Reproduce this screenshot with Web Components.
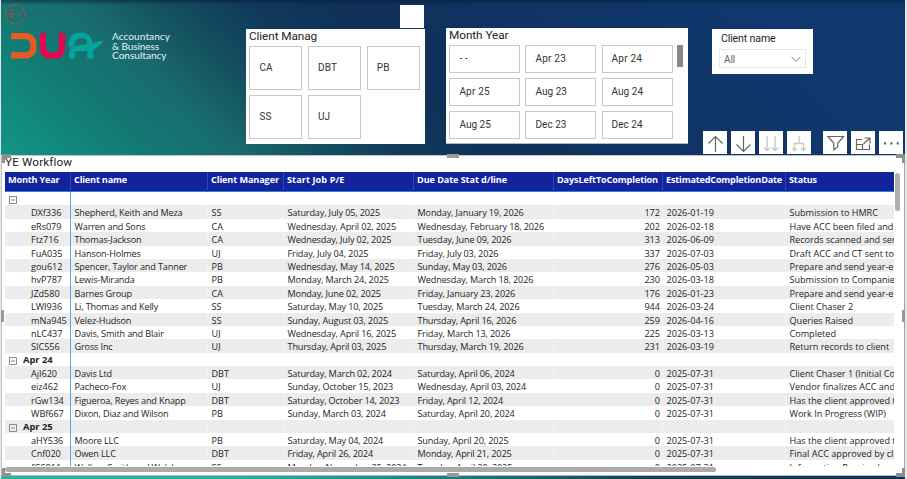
<!DOCTYPE html>
<html lang="en">
<head>
<meta charset="utf-8">
<title>YE Workflow</title>
<style>
html,body{margin:0;padding:0;width:907px;height:479px;overflow:hidden;background:#e6e6e6}
</style>
</head>
<body>
<report-page></report-page>
<script>
function define(name, html, setup) {
  const t = document.createElement('template');
  t.innerHTML = html;
  customElements.define(name, class extends HTMLElement {
    connectedCallback() {
      if (this.shadowRoot) return;
      this.attachShadow({mode: 'open'}).appendChild(t.content.cloneNode(true));
      if (setup) setup(this, this.shadowRoot);
    }
  });
}

// Text whose tracking is adjusted so that it takes the width in its "w" attribute.
define('fit-text', `<style>:host{display:inline-block;white-space:nowrap}</style><span><slot></slot></span>`, (el, root) => {
  const w = parseFloat(el.getAttribute('w'));
  if (!w) return;
  const s = root.querySelector('span');
  const n = el.textContent.length;
  s.style.letterSpacing = ((w - s.getBoundingClientRect().width) / n) + 'px';
});

define('brand-logo', `
<style>
:host{display:flex;align-items:flex-start;color:#e4f0ef;font:10.1px/9.5px Lato,sans-serif}
svg{display:block;flex:none}
.t{display:flex;flex-direction:column;padding-left:8px}
</style>
<svg width="93" height="29" viewBox="0 0 93 29" fill="none">
<path d="M.3 4.2H14.8A7.6 7.6 0 0 1 22.4 11.8V15.8A7.6 7.6 0 0 1 14.8 23.4H.3" stroke="#ea5a1e" stroke-width="6.2"/>
<path d="M31.9 1.1V14.5Q31.9 23.5 39.6 23.5H43Q51 23.5 51 14.5V1.1" stroke="#e5064f" stroke-width="6.2"/>
<path d="M57.7 15.4V11.5Q58 0.8 68.7 .8H72.2Q79.2 1 82 10.7L92.3 8.6Q88.5 15.2 82.4 17.4V26.6H76.3V19H67Q64 19.2 63.8 22V26.6H57.7V21.5Q58 14.5 66.5 13.7L76.2 12Q76 6.2 71.5 6.2H68.7Q63.8 6.3 63.6 11.7Q63.6 15.2 57.7 15.4Z" fill="#05a39b"/>
</svg>
<div class="t"><fit-text w="58">Accountancy</fit-text><fit-text w="47">&amp; Business</fit-text><fit-text w="54.5">Consultancy</fit-text></div>`);

define('slicer-tile', `
<style>:host{display:flex;align-items:center;box-sizing:border-box;border:1px solid #c8c8c8;padding-left:9px;color:#333;font:10px/12px Roboto,sans-serif;background:#fff}</style>
<slot></slot>`);

define('tile-slicer', `
<style>
:host{display:block;box-sizing:border-box;background:#fff;color:#252423}
.h{font:11.8px/14px Roboto,sans-serif;padding:0 0 0 3px;height:17px;box-sizing:border-box}
.g{display:grid;padding-left:3.4px;grid-template-columns:var(--cols);grid-auto-rows:var(--row);gap:var(--gap)}
.b{display:flex}.s{width:6px;height:22px;background:#8a8886;margin-left:4px}
</style>
<div class="h"><slot name="title"></slot></div><div class="b"><div class="g"><slot></slot></div></div>`, (el, root) => {
  if (el.hasAttribute('scroll')) {
    const s = document.createElement('div');
    s.className = 's';
    root.querySelector('.b').append(s);
  }
});

define('dropdown-slicer', `
<style>
:host{display:flex;flex-direction:column;box-sizing:border-box;background:#fff;padding:3px 7px 0;font:11px/13px Roboto,sans-serif;color:#252423}
.h{padding-left:2px;font-size:10.6px;height:17px}
.d{display:flex;align-items:center;justify-content:space-between;border:1px solid #e6e6e6;box-sizing:border-box;height:19px;width:87px;padding:2px 4px 0 4px;color:#605e5c;font-size:10px}
</style>
<div class="h"><fit-text w="54.5">Client name</fit-text></div>
<div class="d"><fit-text w="11">All</fit-text><svg width="10" height="7" viewBox="0 0 10 7"><path d="M.6 1L5 5.4L9.4 1" fill="none" stroke="#8a8886"/></svg></div>`);

const ICONS = {
  up: '<path d="M12.5 21V5.5M5.5 12.5L12.5 5.5L19.5 12.5" stroke="#666" stroke-width="1.2"/>',
  down: '<path d="M12.5 5V20.5M5.5 13.5L12.5 20.5L19.5 13.5" stroke="#666" stroke-width="1.2"/>',
  next: '<path d="M8 5V19.5M5 16.5L8 19.5L11 16.5M16 5V19.5M13 16.5L16 19.5L19 16.5" stroke="#c8c8c8" stroke-width="1.4"/>',
  expand: '<path d="M12 5V12M7.5 19.5V12.5H16.5V19.5M5 17L7.5 19.5L10 17M14 17L16.5 19.5L19 17" stroke="#c8c8c8" stroke-width="1.4"/>',
  filter: '<path d="M5 5.5H20.5L14.7 12.3V16L10.8 18.8V12.3Z" stroke="#666" stroke-width="1.2"/>',
  focus: '<path d="M11 8.5H5.5V18.5H18.5V13.5M5.5 13.5H11.5V18.5M13.5 7H19V12.5M18.7 7.3L12.5 13" stroke="#666" stroke-width="1.2"/>',
  more: '<path d="M5 11.3h2.2v2.2H5zM11.3 11.3h2.2v2.2h-2.2zM17.6 11.3h2.2v2.2h-2.2z" fill="#666"/>'
};
define('visual-icon', `<style>:host{display:block;width:24px;height:23px;background:#fff}svg{display:block}</style><svg width="24" height="23" viewBox="0 0 24 23" fill="none"></svg>`, (el, root) => {
  root.querySelector('svg').innerHTML = ICONS[el.getAttribute('name')];
});

define('matrix-row', `
<style>
:host{display:grid;grid-template-columns:66px 137px 76px 130px 140px 109px 123px 180px;height:13.4px;flex:none;width:961px;color:#252423;font:9.15px/13.4px "Open Sans",sans-serif}
:host([alt]){background:#ececec}
span{white-space:pre;padding-left:3.5px;padding-top:1px;letter-spacing:-.02px;box-sizing:border-box;box-shadow:inset -1px 0 rgba(255,255,255,.35)}
span:nth-of-type(1){padding-left:26px;border-right:1px solid #55a5ee;box-shadow:none;letter-spacing:-.05px}
span:nth-of-type(2),span:nth-of-type(4),span:nth-of-type(5){letter-spacing:-.15px}
span:nth-of-type(6){text-align:right;padding-right:3px}
:host([group]) span:nth-of-type(1){padding-left:3px;padding-top:0;font-weight:700;display:flex;font-size:9.4px}
svg{margin:4px 6px 0 1px;flex:none}
:host([head]){height:20px;background:#12239e;color:#fff;font-weight:700;box-shadow:inset 0 -1px #2c7fe0;line-height:16px}
:host([head]) span,:host([head]) span:nth-of-type(1){padding-left:3px;padding-top:0;border:0;letter-spacing:0;box-shadow:inset -1px 0 #3446b5}
:host([head]) span:nth-of-type(6){padding-right:5px;padding-left:0}
</style>`, (el, root) => {
  const head = el.hasAttribute('head'), group = el.hasAttribute('group');
  const widths = (el.getAttribute('widths') || '').split('|');
  el.getAttribute('cells').split('|').forEach((c, i) => {
    const s = document.createElement('span');
    if (group && i === 0) s.innerHTML = '<svg width="8" height="8" viewBox="0 0 8 8" fill="none"><path d="M.5 .5H7.5V7.5H.5ZM2 4H6" stroke="#8a8886"/></svg>';
    root.append(s);
    if (head) {
      const f = document.createElement('fit-text');
      f.setAttribute('w', widths[i]);
      f.textContent = c;
      s.append(f);
    } else s.append(c);
  });
});

define('workflow-matrix', `
<style>
:host{display:block;box-sizing:border-box;background:#fff;position:relative;border-top:1px solid #c4c4c4;border-bottom:1px solid #b8b8b8;border-left:1px solid #c4c4c4;border-right:1px solid #a6a6a6}
.h{height:16px;font:11.7px/13px Roboto,sans-serif;color:#252423;padding-left:3px;box-sizing:border-box}
.b{display:flex;margin-left:3px}
.v{width:889px;height:294px;overflow:hidden;display:flex;flex-direction:column}
.s{width:5px;height:38px;border-radius:3px;background:#b0aeac;margin:1px 0 0 1px}
.x{width:711px;height:5px;border-radius:3px;background:#adabaa;margin-left:3px;margin-top:1px}
i{position:absolute;box-sizing:border-box}
.m{width:12px;height:4px;background:#999}
.c{width:9px;height:9px;border:0 solid #8f8f8f}
</style>
<div class="h"><fit-text w="67">YE Workflow</fit-text></div>
<div class="b"><div class="v"></div><div class="s"></div></div>
<div class="x"></div>
<i class="m" style="left:445px;top:-2px"></i><i class="m" style="left:445px;bottom:-2px"></i>
<i class="m" style="left:-1px;top:154px;width:3px;height:12px"></i><i class="m" style="right:-1px;top:154px;width:3px;height:12px"></i>
<i class="c" style="left:0;top:-2px;border-width:4px 0 0 3px"></i><i class="c" style="right:-1px;top:-2px;border-width:4px 3px 0 0"></i>
<i class="c" style="left:0;bottom:-2px;border-width:0 0 4px 3px"></i><i class="c" style="right:-1px;bottom:-2px;border-width:0 3px 4px 0"></i>`, (el, root) => {
  const v = root.querySelector('.v');
  const add = (cells, attrs) => {
    const r = document.createElement('matrix-row');
    r.setAttribute('cells', cells);
    for (const k in attrs) r.setAttribute(k, attrs[k]);
    v.append(r);
  };
  add('Month Year|Client name|Client Manager|Start Job P/E|Due Date Stat d/line|DaysLeftToCompletion|EstimatedCompletionDate|Status', {head: '', widths: '51.5|53|68|57.5|90|101|116|28'});
  const rows = `*|||||||
DXf336|Shepherd, Keith and Meza|SS|Saturday, July 05, 2025|Monday, January 19, 2026|172|2026-01-19|Submission to HMRC
eRs079|Warren and Sons|CA|Wednesday, April 02, 2025|Wednesday, February 18, 2026|202|2026-02-18|Have ACC been filed and
Ftz716|Thomas-Jackson|CA|Wednesday, July 02, 2025|Tuesday, June 09, 2026|313|2026-06-09|Records scanned and sent
FuA035|Hanson-Holmes|UJ|Friday, July 04, 2025|Friday, July 03, 2026|337|2026-07-03|Draft ACC and CT sent to
gou612|Spencer, Taylor and Tanner|PB|Wednesday, May 14, 2025|Sunday, May 03, 2026|276|2026-05-03|Prepare and send year-end
hvP787|Lewis-Miranda|PB|Monday, March 24, 2025|Wednesday, March 18, 2026|230|2026-03-18|Submission to Companies
JZd580|Barnes Group|CA|Monday, June 02, 2025|Friday, January 23, 2026|176|2026-01-23|Prepare and send year-end
LWI936|Li, Thomas and Kelly|SS|Saturday, May 10, 2025|Tuesday, March 24, 2026|944|2026-03-24|Client Chaser 2
mNa945|Velez-Hudson|SS|Sunday, August 03, 2025|Thursday, April 16, 2026|259|2026-04-16|Queries Raised
nLC437|Davis, Smith and Blair|UJ|Wednesday, April 16, 2025|Friday, March 13, 2026|225|2026-03-13|Completed
SIC556|Gross Inc|UJ|Thursday, April 03, 2025|Thursday, March 19, 2026|231|2026-03-19|Return records to client
*Apr 24|||||||
AjI620|Davis Ltd|DBT|Saturday, March 02, 2024|Saturday, April 06, 2024|0|2025-07-31|Client Chaser 1 (Initial Co
eiz462|Pacheco-Fox|UJ|Sunday, October 15, 2023|Wednesday, April 03, 2024|0|2025-07-31|Vendor finalizes ACC and
rGw134|Figueroa, Reyes and Knapp|DBT|Saturday, October 14, 2023|Friday, April 12, 2024|0|2025-07-31|Has the client approved t
WBf667|Dixon, Diaz and Wilson|PB|Sunday, March 03, 2024|Saturday, April 20, 2024|0|2025-07-31|Work In Progress (WIP)
*Apr 25|||||||
aHY536|Moore LLC|PB|Saturday, May 04, 2024|Sunday, April 20, 2025|0|2025-07-31|Has the client approved t
Cnf020|Owen LLC|DBT|Friday, April 26, 2024|Monday, April 21, 2025|0|2025-07-31|Final ACC approved by cli
fGS811|Walker, Smith and Welsh|SS|Monday, November 25, 2024|Tuesday, April 29, 2025|0|2025-07-31|Information Received and`.split('\n');
  rows.forEach((r, i) => {
    const g = r[0] === '*';
    const a = {};
    if (g) a.group = '';
    if (i % 2) a.alt = '';
    add(g ? r.slice(1) : r, a);
  });
});

define('report-page', `
<style>
:host{display:grid;grid-template-rows:155px 321px 3px;width:904px;height:479px;margin-left:1px;background:#10366b}
.top{display:grid;grid-template-columns:245px 200px 266px 1fr;
background:linear-gradient(180deg,rgba(5,25,45,.5),transparent 5px),linear-gradient(43deg,#109684 0,#137772 15%,#196c6e 22%,#14505f 30%,#103a5c 38%,#0f3058 47%,#0f3363 60%,#10386e 85%)}
.left{padding:3px 0 0 4px}
.back{display:block}
brand-logo{margin:7px 0 0 6px}
.mid{display:flex;flex-direction:column;padding-top:5px}
.blank{width:24px;height:23px;background:#fff;margin-left:154px;margin-bottom:1px}
.a{width:179px;height:115px;--cols:53px 53px 53px;--row:44px;--gap:5px 5.7px}
.m{width:242px;height:116px;margin-top:28px;--cols:71px 71px 71px;--row:28px;--gap:5.1px;border-bottom:1px solid #aebac9}
.r{display:flex;flex-direction:column;justify-content:space-between;padding:29px 0 1px}
dropdown-slicer{width:101px;height:45px;align-self:flex-start}
.i{display:flex;gap:4px;margin-left:-9px}
.i :nth-child(5){margin-left:8px}
workflow-matrix{width:904px}
.f{background:linear-gradient(90deg,#20b8a2,#1db29f 28%,#117a80 52%,#123f59 72%,#103255)}
</style>
<div class="top">
 <div class="left">
  <svg class="back" width="21" height="22" viewBox="0 0 21 22" fill="none" stroke="#64615f" stroke-width="1.7"><circle cx="10.2" cy="11.2" r="9.7"/><path d="M16.5 11.2H4.5M9.5 6L4.3 11.2L9.5 16.4"/></svg>
  <brand-logo></brand-logo>
 </div>
 <div class="mid"><div class="blank"></div>
  <tile-slicer class="a"><fit-text slot="title" w="68">Client Manag</fit-text>
   <slicer-tile><fit-text w="13">CA</fit-text></slicer-tile><slicer-tile><fit-text w="19">DBT</fit-text></slicer-tile><slicer-tile><fit-text w="13">PB</fit-text></slicer-tile><slicer-tile><fit-text w="12">SS</fit-text></slicer-tile><slicer-tile><fit-text w="12">UJ</fit-text></slicer-tile>
  </tile-slicer></div>
 <div>
  <div style="display:flex"><tile-slicer class="m" scroll><fit-text slot="title" w="59.5">Month Year</fit-text>
   <slicer-tile><fit-text w="11">--</fit-text></slicer-tile><slicer-tile><fit-text w="30.5">Apr 23</fit-text></slicer-tile><slicer-tile><fit-text w="30.5">Apr 24</fit-text></slicer-tile>
   <slicer-tile><fit-text w="30.5">Apr 25</fit-text></slicer-tile><slicer-tile><fit-text w="31.5">Aug 23</fit-text></slicer-tile><slicer-tile><fit-text w="31.5">Aug 24</fit-text></slicer-tile>
   <slicer-tile><fit-text w="31.5">Aug 25</fit-text></slicer-tile><slicer-tile><fit-text w="31">Dec 23</fit-text></slicer-tile><slicer-tile><fit-text w="31">Dec 24</fit-text></slicer-tile>
  </tile-slicer></div></div>
 <div class="r"><dropdown-slicer></dropdown-slicer>
  <div class="i"><visual-icon name="up"></visual-icon><visual-icon name="down"></visual-icon><visual-icon name="next"></visual-icon><visual-icon name="expand"></visual-icon><visual-icon name="filter"></visual-icon><visual-icon name="focus"></visual-icon><visual-icon name="more"></visual-icon></div></div>
</div>
<workflow-matrix></workflow-matrix>
<div class="f"></div>`);
</script>
</body>
</html>
